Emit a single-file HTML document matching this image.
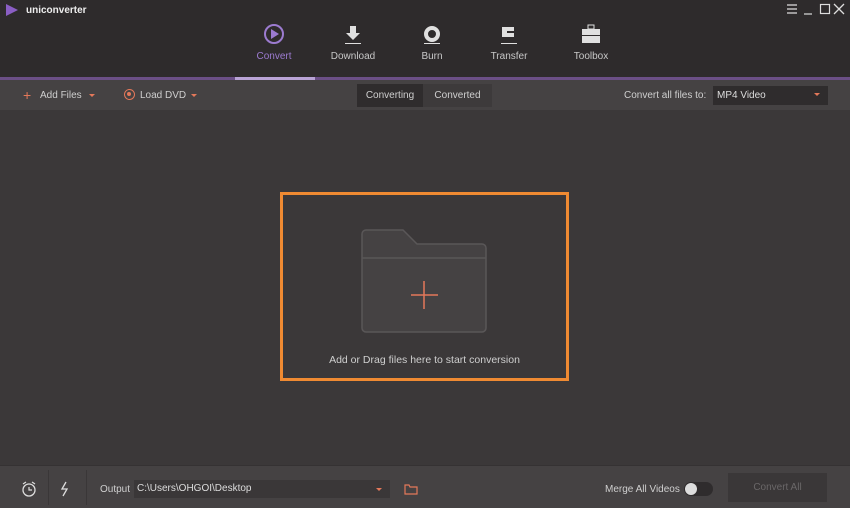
<!DOCTYPE html>
<html><head><meta charset="utf-8"><style>
*{margin:0;padding:0;box-sizing:border-box}
body{width:850px;height:508px;overflow:hidden;background:#3b3839;font-family:"Liberation Sans",sans-serif;font-size:10px;color:#cfcfcf;position:relative}
.abs{position:absolute;white-space:nowrap}
#top{left:0;top:0;width:850px;height:78px;background:#2e2b2c}
#line{left:0;top:77px;width:850px;height:3px;background:#6b4f86}
#tool{left:0;top:80px;width:850px;height:30px;background:#454243}
#bot{left:0;top:465px;width:850px;height:43px;background:#454243;border-top:1px solid #353233}
.nav{top:23px;width:80px;text-align:center;color:#c8c8c8;font-size:10px}
.nav svg{display:block;margin:0 auto 6px}
</style></head><body>
<div id="top" class="abs"></div>
<div id="line" class="abs"></div>
<div class="abs" style="left:235px;top:77px;width:80px;height:3px;background:#b9a3d6"></div>
<svg class="abs" style="left:5px;top:4px" width="14" height="12"><polygon points="1,0 13,6 1,12" fill="#8a5ec4"/></svg>
<div class="abs" style="left:26px;top:5px;font-weight:bold;color:#eee;font-size:10px">uniconverter</div>
<svg class="abs" style="left:786px;top:3px" width="60" height="12"><path d="M1 2h10M1 6h10M1 10h10" stroke="#ddd" stroke-width="1.2"/><path d="M18 11h8" stroke="#ddd" stroke-width="1.2"/><rect x="34.5" y="1.5" width="9" height="9" fill="none" stroke="#ddd" stroke-width="1.2"/><path d="M48 1l10 10M58 1l-10 10" stroke="#ddd" stroke-width="1.3"/></svg>

<div class="abs nav" style="left:234px;color:#9c7bd0"><svg width="22" height="22"><circle cx="11" cy="11" r="9" fill="none" stroke="#9c7bd0" stroke-width="2"/><polygon points="8,6 16,11 8,16" fill="#9c7bd0"/></svg>Convert</div>
<div class="abs nav" style="left:313px"><svg width="22" height="22"><path d="M8 3h6v7h4l-7 7-7-7h4z" fill="#e0e0e0"/><rect x="3" y="20" width="16" height="1" fill="#e0e0e0"/></svg>Download</div>
<div class="abs nav" style="left:392px"><svg width="22" height="22"><circle cx="11" cy="11" r="6" fill="none" stroke="#e0e0e0" stroke-width="4"/><rect x="3" y="20" width="16" height="1" fill="#e0e0e0"/></svg>Burn</div>
<div class="abs nav" style="left:469px"><svg width="22" height="22"><rect x="4" y="4" width="12" height="10" fill="#e0e0e0"/><rect x="9" y="8" width="10" height="2" fill="#2e2b2c"/><rect x="3" y="20" width="16" height="1" fill="#e0e0e0"/></svg>Transfer</div>
<div class="abs nav" style="left:551px"><svg width="22" height="22"><rect x="8" y="2" width="6" height="4" fill="none" stroke="#e0e0e0"/><rect x="2" y="6" width="18" height="14" fill="#e0e0e0"/><rect x="2" y="12" width="18" height="1" fill="#2e2b2c"/></svg>Toolbox</div>

<div id="tool" class="abs"></div>
<div class="abs" style="left:23px;top:88px;color:#e4785a;font-size:14px;line-height:14px">+</div>
<div class="abs" style="left:40px;top:90px">Add Files</div>
<div class="abs" style="left:89px;top:94px;border:3px solid transparent;border-top:3px solid #e4785a"></div>
<div class="abs" style="left:124px;top:89px;width:11px;height:11px;border:1.5px solid #e4785a;border-radius:50%"><div style="width:4px;height:4px;background:#e4785a;border-radius:50%;margin:2px"></div></div>
<div class="abs" style="left:140px;top:90px">Load DVD</div>
<div class="abs" style="left:191px;top:94px;border:3px solid transparent;border-top:3px solid #e4785a"></div>
<div class="abs" style="left:357px;top:84px;width:66px;height:23px;background:#2f2c2d;text-align:center;line-height:23px">Converting</div>
<div class="abs" style="left:423px;top:84px;width:69px;height:23px;background:#3d3a3b;text-align:center;line-height:23px">Converted</div>
<div class="abs" style="left:624px;top:90px">Convert all files to:</div>
<div class="abs" style="left:713px;top:86px;width:115px;height:19px;background:#2f2c2d;padding:4px 4px;color:#ddd">MP4 Video</div>
<div class="abs" style="left:814px;top:93px;border:3px solid transparent;border-top:3px solid #e4785a"></div>

<div class="abs" style="left:280px;top:192px;width:289px;height:189px;border:3px solid #ef8a32"></div>
<svg class="abs" style="left:360px;top:228px" width="130" height="105"><path d="M6 2h37l14 14h65a4 4 0 0 1 4 4v80a4 4 0 0 1-4 4H6a4 4 0 0 1-4-4V6a4 4 0 0 1 4-4z" fill="#454243" stroke="#5a5758" stroke-width="1.5"/><line x1="2" y1="30" x2="126" y2="30" stroke="#5a5758" stroke-width="1.5"/><line x1="51" y1="67" x2="78" y2="67" stroke="#e4785a" stroke-width="1.5"/><line x1="64" y1="53" x2="64" y2="81" stroke="#e4785a" stroke-width="1.5"/></svg>
<div class="abs" style="left:280px;top:354px;width:289px;text-align:center;font-size:10.5px;color:#cfcfcf">Add or Drag files here to start conversion</div>

<div id="bot" class="abs"></div>
<svg class="abs" style="left:21px;top:481px" width="16" height="16"><circle cx="8" cy="9" r="6" fill="none" stroke="#ddd" stroke-width="1.3"/><path d="M8 6v3h3M2 3l3-2M14 3l-3-2" stroke="#ddd" fill="none" stroke-width="1.2"/></svg>
<svg class="abs" style="left:59px;top:481px" width="12" height="16"><path d="M7 1L3 8h5l-4 7" stroke="#ddd" fill="none" stroke-width="1.3"/></svg>
<div class="abs" style="left:48px;top:470px;width:1px;height:35px;background:#3a3738"></div>
<div class="abs" style="left:86px;top:470px;width:1px;height:35px;background:#3a3738"></div>
<div class="abs" style="left:100px;top:484px">Output</div>
<div class="abs" style="left:134px;top:480px;width:256px;height:18px;background:#3a3738;padding:3px 3px;color:#ddd">C:\Users\OHGOI\Desktop</div>
<div class="abs" style="left:376px;top:488px;border:3px solid transparent;border-top:3px solid #e4785a"></div>
<svg class="abs" style="left:404px;top:483px" width="14" height="12"><path d="M1 2h4l1 2h7v7H1z" fill="none" stroke="#e4785a" stroke-width="1.2"/></svg>
<div class="abs" style="left:605px;top:484px">Merge All Videos</div>
<div class="abs" style="left:684px;top:482px;width:29px;height:14px;background:#2f2c2d;border-radius:7px"><div style="width:12px;height:12px;background:#ddd;border-radius:50%;margin:1px 0 0 1px"></div></div>
<div class="abs" style="left:728px;top:473px;width:99px;height:29px;background:#3a3738;text-align:center;line-height:29px;color:#6a6768">Convert All</div>
</body></html>
